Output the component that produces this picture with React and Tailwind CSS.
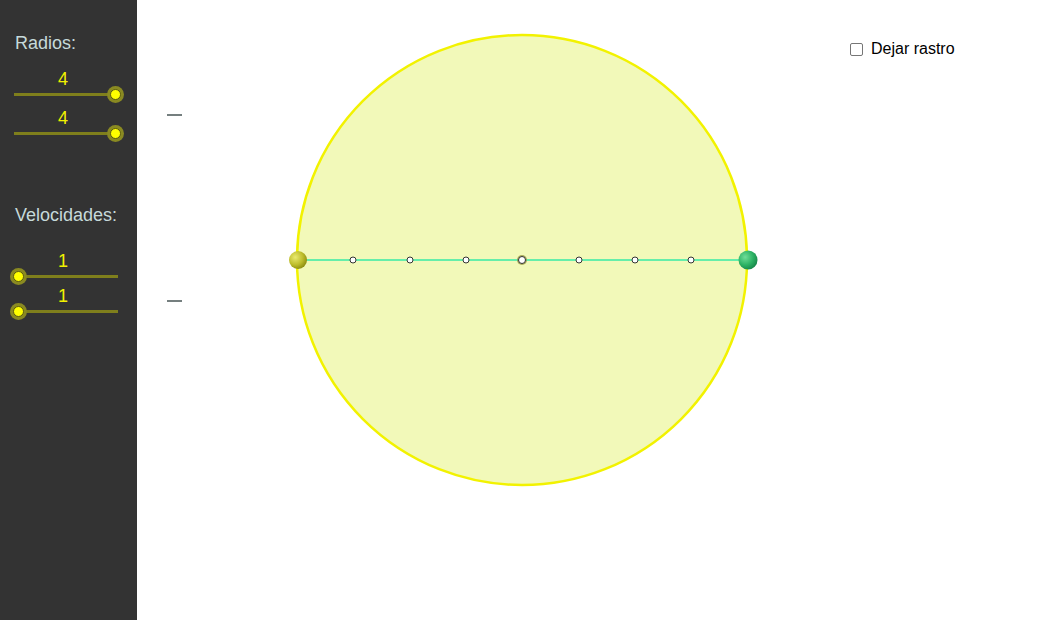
function Slider({ value, knob = "right", className = "" }) {
  return (
    <div className={"flex flex-col " + className}>
      <div className="w-[126px] text-center text-[18px] leading-[18px] text-[#f0f000]">{value}</div>
      <div
        className={
          "relative mt-[5px] h-[3px] bg-[#7f7f1c] " +
          (knob === "right" ? "ml-[14px] w-[102px]" : "ml-[18px] w-[100px]")
        }
      >
        <div
          className={
            "absolute top-[-7px] flex h-[17px] w-[17px] items-center justify-center rounded-full bg-[#8a8a22] " +
            (knob === "right" ? "right-[-8px]" : "left-[-8px]")
          }
        >
          <div className="h-[11px] w-[11px] rounded-full border border-[#5a5a10] bg-[#ffff00]" />
        </div>
      </div>
    </div>
  );
}

export default function App() {
  return (
    <div className="flex h-[620px] w-[1040px] bg-white font-['Liberation_Sans',Arial,sans-serif]">
      <aside className="flex w-[137px] shrink-0 flex-col bg-[#333333] pt-[33px]">
        <div className="pl-[15px] text-[18px] leading-[20px] text-[#c6dada]">Radios:</div>
        <Slider value="4" className="mt-[17px]" />
        <Slider value="4" className="mt-[13px]" />
        <div className="mt-[70px] pl-[15px] text-[18px] leading-[20px] text-[#c6dada]">Velocidades:</div>
        <Slider value="1" knob="left" className="mt-[27px]" />
        <Slider value="1" knob="left" className="mt-[9px]" />
      </aside>

      <main className="relative flex-1">
        <svg width="903" height="620" viewBox="0 0 903 620">
          <defs>
            <radialGradient id="gy" cx="0.35" cy="0.35" r="0.7">
              <stop offset="0" stopColor="#eaea70" />
              <stop offset="0.6" stopColor="#bdbd2c" />
              <stop offset="1" stopColor="#8c8c10" />
            </radialGradient>
            <radialGradient id="gg" cx="0.35" cy="0.35" r="0.7">
              <stop offset="0" stopColor="#70dd98" />
              <stop offset="0.6" stopColor="#2cb264" />
              <stop offset="1" stopColor="#17874a" />
            </radialGradient>
          </defs>
          <line x1="30" y1="115" x2="45" y2="115" stroke="#2a3a3a" strokeWidth="1.3" />
          <line x1="30" y1="301" x2="45" y2="301" stroke="#2a3a3a" strokeWidth="1.3" />
          <circle cx="385" cy="260" r="225" fill="#f2f9b9" stroke="#f2f200" strokeWidth="2.5" />
          <line x1="161" y1="260" x2="611" y2="260" stroke="#66eeaa" strokeWidth="2" />
          {[216, 273, 329, 442, 498, 554].map((x) => (
            <circle key={x} cx={x} cy="260" r="3" fill="white" stroke="#333" strokeWidth="1" />
          ))}
          <circle cx="385" cy="260" r="5" fill="#8a8a30" opacity="0.7" />
          <circle cx="385" cy="260" r="3.5" fill="white" stroke="#333" strokeWidth="1" />
          <circle cx="161" cy="260" r="9" fill="url(#gy)" />
          <circle cx="611" cy="260" r="9.5" fill="url(#gg)" />
        </svg>

        <label className="absolute left-[713px] top-[37px] flex items-center gap-[8px] text-[16px] text-black">
          <span className="h-[13px] w-[13px] rounded-[2px] border border-[#767676] bg-white" />
          Dejar rastro
        </label>
      </main>
    </div>
  );
}
